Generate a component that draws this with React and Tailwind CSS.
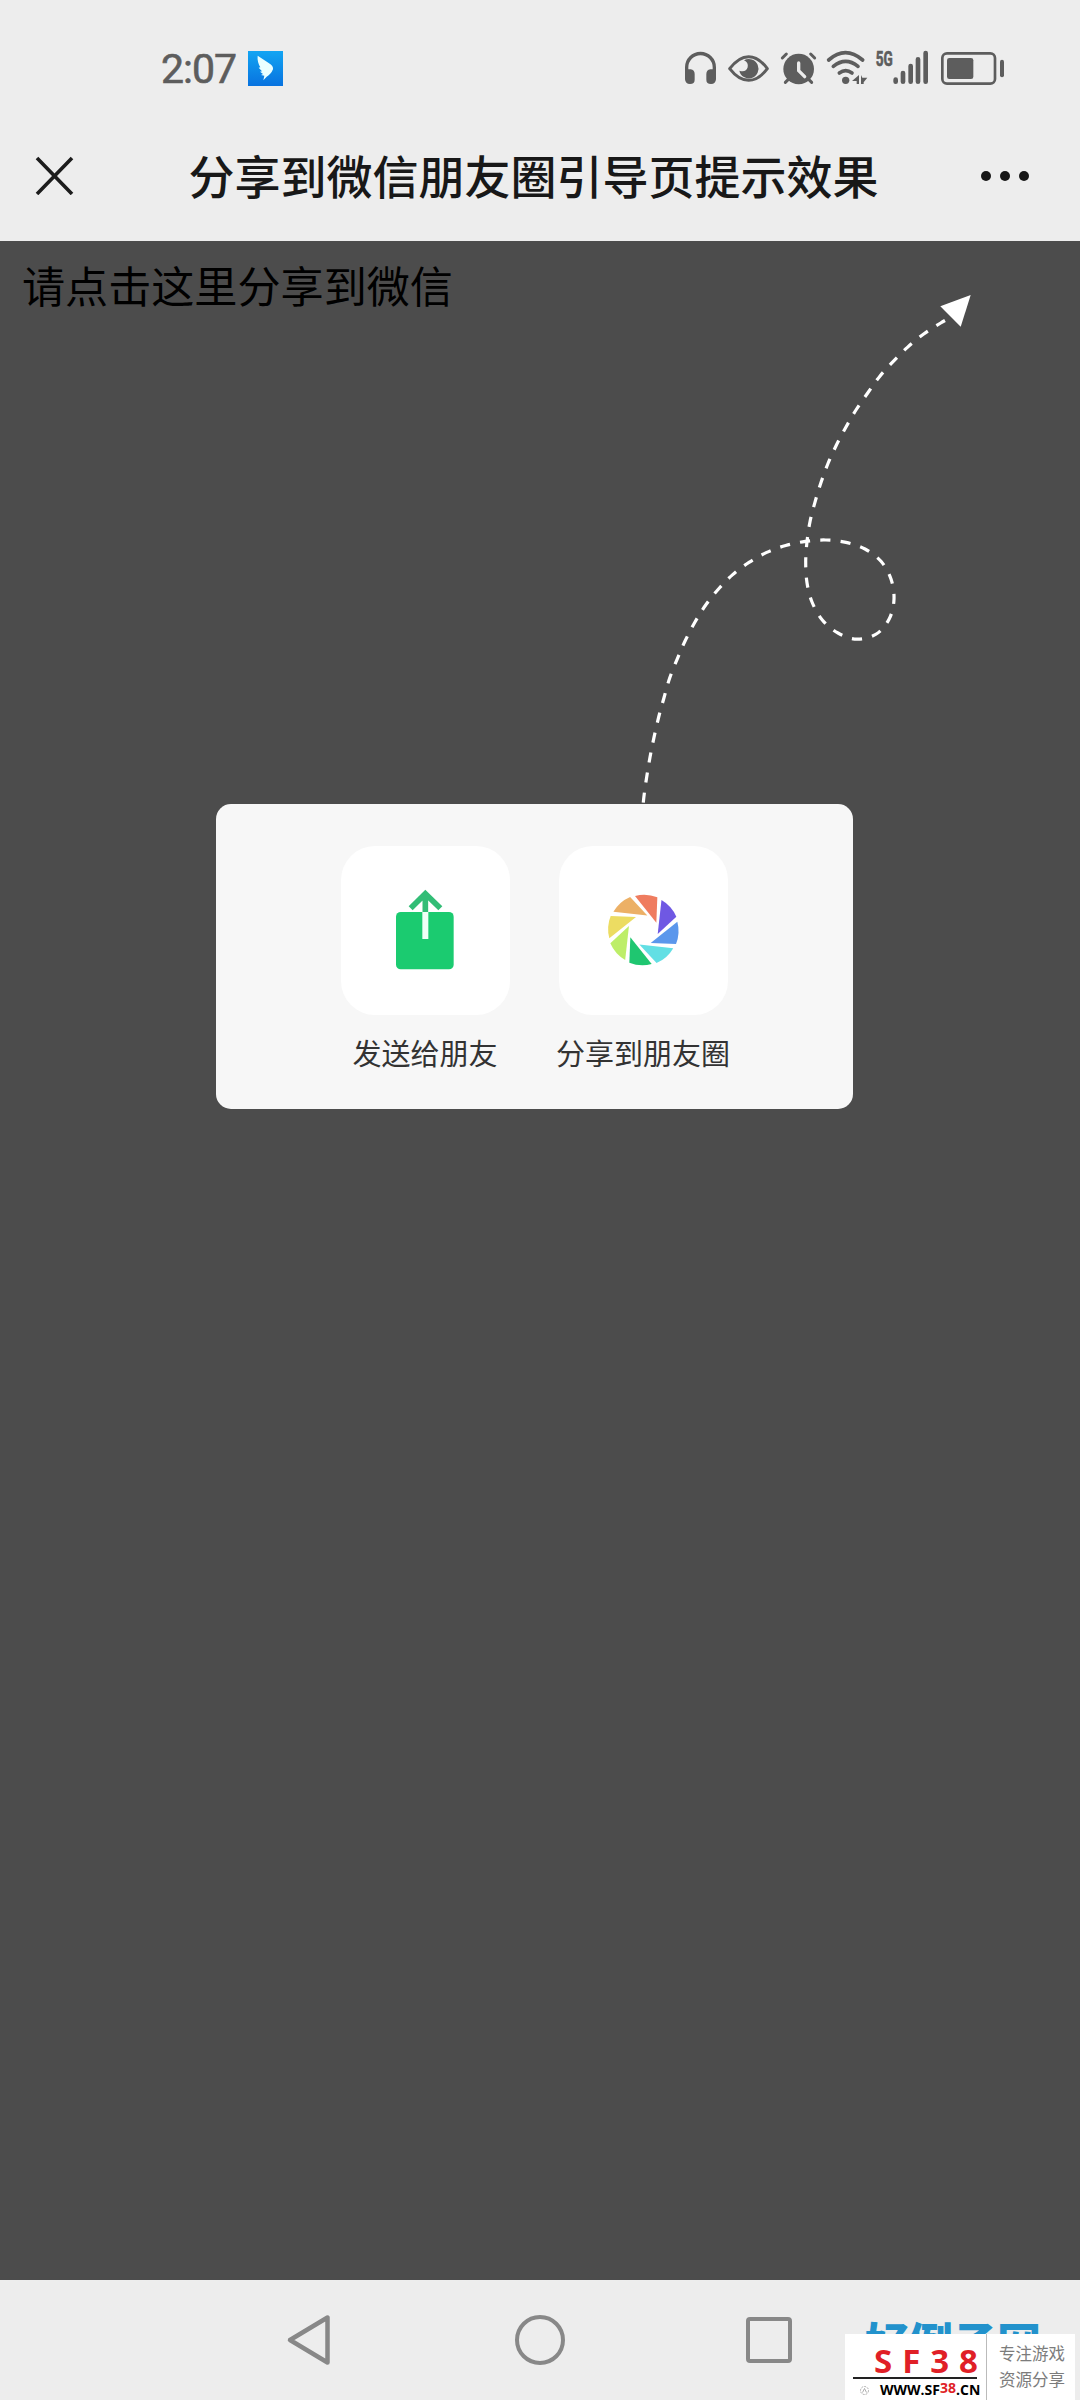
import clsx from 'clsx';

// Midpoints of the dashes along the guide line, from the card up to the menu button
const GUIDE_POINTS = [
  [642, 818], [643.8, 797.6], [646.7, 777], [650, 757.3], [654, 737.3], [658.7, 717], [664, 697.7],
  [669.7, 678], [677.3, 658.8], [685.3, 640.5], [695, 622], [705.7, 605], [718.3, 589.2],
  [732.7, 574.6], [749, 562.4], [766.7, 552.4], [785.7, 545.5], [805.3, 541.4], [825.7, 540],
  [846, 542.4], [865, 549], [881, 561.3], [891, 579], [894, 599.2], [889.3, 618.8],
  [876.3, 634], [857, 639.2], [838, 633], [822.3, 620], [812, 602], [807, 582.7],
  [805.7, 562], [807, 541.7], [810, 521.7], [815, 502.1], [821, 482.5], [828, 463.5],
  [836.3, 445.3], [846, 427], [856.3, 409.5], [867.7, 393], [879.7, 376.4], [893.3, 361.3],
  [907.7, 347.1], [923.7, 334], [940.7, 323], [958.5, 313]
];

const BLADES = ['#ef7c5f', '#6f58e3', '#5b97ec', '#62dfe4', '#1fc670', '#bdee68', '#ecdc62', '#ecb066'];

// Catmull-Rom spline through the points, written as cubic segments
function smoothPath(points) {
  let d = `M${points[0][0]} ${points[0][1]}`;
  for (let i = 0; i < points.length - 1; i++) {
    const p0 = points[i - 1] || points[i];
    const p1 = points[i];
    const p2 = points[i + 1];
    const p3 = points[i + 2] || p2;
    d += `C${p1[0] + (p2[0] - p0[0]) / 6} ${p1[1] + (p2[1] - p0[1]) / 6} ${p2[0] - (p3[0] - p1[0]) / 6} ${p2[1] - (p3[1] - p1[1]) / 6} ${p2[0]} ${p2[1]}`;
  }
  return d;
}

function StatusIcons() {
  return (
    <svg width="350" height="80" viewBox="0 0 1050 240" fill="none" stroke="#5d5d5d" strokeLinecap="round" strokeLinejoin="round">
      {/* headphones */}
      <path d="M50 138V112a41.500 41.500 0 0 1 83 0v26" strokeWidth="10" />
      <path d="M45 118h17q12 2 12 14v17q0 13-14 13t-15-14zM138 118h-17q-12 2-12 14v17q0 13 14 13t15-14z" fill="#5d5d5d" stroke="none" />
      {/* eye */}
      <path d="M179 116q27-36 57-36t56 36q-26 35-56 35t-57-35z" strokeWidth="9" />
      <path d="M222 91a29 29 0 1 1-14 31q20 6 25-10 3-15-11-21z" fill="#5d5d5d" stroke="none" />
      {/* alarm */}
      <circle cx="386" cy="117" r="46" fill="#5d5d5d" stroke="none" />
      <path d="M337 84l12-12M434 84l-12-12M346 157l12-12M425 157l-12-12" strokeWidth="9" />
      <path d="M386 99v23l18 18" stroke="#ececec" strokeWidth="10" />
      {/* wifi */}
      <path d="M476 90q50-44 102 0M490 109q37-30 74 0M508 129q19-14 38 0" strokeWidth="11" />
      <circle cx="527" cy="151" r="11" fill="#5d5d5d" stroke="none" />
      <path d="M567 135v27h-7v-9h-14zM573 162v-27l4 8h15l-11 14v5z" fill="#5d5d5d" stroke="none" />
      {/* signal */}
      <path d="M677 149v6M699 129v26M722 108v47M744 88v67M767 69v86" strokeWidth="14" />
      {/* battery */}
      <rect x="817" y="70" width="158" height="91" rx="14" strokeWidth="8" />
      <rect x="831" y="84" width="79" height="63" rx="7" fill="#5d5d5d" stroke="none" />
      <path d="M996 95v41" strokeWidth="12" />
      <text x="617" y="108" fill="#5d5d5d" stroke="#5d5d5d" strokeWidth="2" fontFamily="Roboto" fontWeight="700" fontSize="61" textLength="51" lengthAdjust="spacingAndGlyphs">5G</text>
    </svg>
  );
}

function StatusBar() {
  return (
    <div className="flex h-[110px] items-start pl-[161px] pt-[30px]">
      <span className="w-[87px] pt-[15px] text-[41px] leading-[48px] tracking-[-1px] text-[#5d5d5d] [-webkit-text-stroke:0.6px_#5d5d5d] font-['Roboto',sans-serif]">2:07</span>
      <svg className="mt-[21px]" width="35" height="35" viewBox="0 0 105 105">
        <defs>
          <linearGradient id="wing" x1="0" y1="0" x2="0" y2="1">
            <stop offset="0" stopColor="#12a5f3" />
            <stop offset="1" stopColor="#0872df" />
          </linearGradient>
        </defs>
        <rect width="105" height="105" fill="url(#wing)" />
        <path d="M29 14L62 36q15 9 13 19-6 15-19 22L46 88l3-14-10-2 6-3-9-7 6-1-10-11 5-1q-10-17-8-35z" fill="#eaffff" />
      </svg>
      <div className="ml-[387px]"><StatusIcons /></div>
    </div>
  );
}

function TitleBar() {
  return (
    <header className="flex h-[131px] items-center justify-between pl-[35px] pr-[51px]">
      <svg width="39" height="39" viewBox="0 0 39 39" stroke="#1c1c1c" strokeWidth="3.600">
        <path d="M2 2l35 36M37 2L2 38" />
      </svg>
      <h1 className="ml-[12px] mb-[4px] text-[46px] font-medium leading-[66px] text-[#181818] font-['Noto_Sans_CJK_SC',sans-serif]">分享到微信朋友圈引导页提示效果</h1>
      <div className="flex gap-[9px]">
        <span className="size-[10px] rounded-full bg-[#161616]" />
        <span className="size-[10px] rounded-full bg-[#161616]" />
        <span className="size-[10px] rounded-full bg-[#161616]" />
      </div>
    </header>
  );
}

function SendIcon() {
  return (
    <svg width="100" height="110" viewBox="0 0 300 330">
      <rect x="48" y="126" width="173" height="172" rx="14" fill="#1bcb70" />
      <path d="M136 130V68M92 115l44-44 45 44" fill="none" stroke="#32bd76" strokeWidth="17" />
      <rect x="127" y="126" width="18" height="81" fill="#effff6" />
    </svg>
  );
}

function MomentsIcon() {
  return (
    <svg width="100" height="100" viewBox="0 0 300 300">
      {BLADES.map((color, i) => (
        <path key={color} d="M120 48A106 106 0 0 1 187 52L184 128z" fill={color} transform={`rotate(${i * 45} 145 150)`} />
      ))}
    </svg>
  );
}

function ShareOption({ label, className, children }) {
  return (
    <div className="flex w-[176px] flex-col items-center">
      <div className={clsx('flex h-[169px] w-[169px] rounded-[34px] bg-white', className)}>{children}</div>
      <span className="mt-[16px] whitespace-nowrap text-[29px] leading-[42px] text-[#333]">{label}</span>
    </div>
  );
}

function GuideArrow() {
  const steps = GUIDE_POINTS.length - 1;
  return (
    <svg className="absolute left-0 top-0" width="1080" height="563" viewBox="0 241 1080 563">
      <path
        d={smoothPath(GUIDE_POINTS)}
        pathLength={steps}
        strokeDasharray="0.5 0.5"
        strokeDashoffset="0.25"
        fill="none"
        stroke="#fff"
        strokeWidth="3.200"
      />
      <path d="M970.700 295L940.300 306.200 960.700 326.800z" fill="#fff" />
    </svg>
  );
}

function Watermark() {
  return (
    <div className="absolute bottom-0 right-[5px] h-[84px] w-[230px] font-['Noto_Sans_CJK_SC',sans-serif]">
      <div className="ml-[20px] h-[18px] whitespace-nowrap pt-px text-[44px] font-black leading-[48px] text-[#2292cc]">好例子网</div>
      <div className="relative flex h-[66px] bg-white">
        <div className="w-[142px] border-r border-[#bbb] font-['Open_Sans',sans-serif] font-bold">
          <div className="ml-[8px] flex h-[43px] w-[125px] justify-between pl-[21px] pt-[8px] text-[33px] leading-[38px] text-[#e01f27]">
            <span>S</span>
            <span>F</span>
            <span>3</span>
            <span>8</span>
          </div>
          <div className="ml-[8px] h-[2px] w-[124px] bg-[#222]" />
          <div className="flex h-[21px] items-center pl-[15px] pt-px text-[14px] leading-[18px] text-black">
            <svg width="9" height="9" viewBox="0 0 9 9" fill="none" stroke="#999" strokeWidth="0.800">
              <circle cx="4.500" cy="4.500" r="4" strokeDasharray="2 1" />
              <path d="M2.500 6.500l2-4 2 4" />
            </svg>
            <span className="ml-[11px]">WWW.SF</span>
            <span className="pb-[5px] text-[#e01f27]">38</span>
            <span>.CN</span>
          </div>
        </div>
        <div className="pl-[12px] pt-[6px] text-[16.500px] leading-[26px] text-[#7c7c7c]">
          <p>专注游戏</p>
          <p>资源分享</p>
        </div>
      </div>
    </div>
  );
}

function NavBar() {
  return (
    <nav className="relative flex h-[120px] items-center pl-[286px] text-[#888]">
      <svg width="46" height="52" viewBox="0 0 46 52" fill="none" stroke="currentColor" strokeWidth="4.500" strokeLinejoin="round">
        <path d="M4 26L41.500 3.500v45z" />
      </svg>
      <div className="ml-[183px] size-[50px] rounded-full border-[4.500px] border-current" />
      <div className="ml-[181px] size-[46px] rounded-[4px] border-[4px] border-current" />
      <Watermark />
    </nav>
  );
}

export default function App() {
  return (
    <div className="flex h-[2400px] w-[1080px] flex-col overflow-hidden bg-[#ededed] font-['Noto_Sans_CJK_SC',sans-serif]">
      <StatusBar />
      <TitleBar />
      <main className="relative h-[2039px] bg-[#4c4c4c]">
        <p className="h-[563px] pl-[22px] pt-[12px] text-[43.100px] leading-[62px] text-black">请点击这里分享到微信</p>
        <GuideArrow />
        <section className="ml-[216px] flex h-[305px] w-[637px] gap-[42px] rounded-[15px] bg-[#f7f7f7] pl-[121px] pt-[42px]">
          <ShareOption label="发送给朋友" className="pl-[39px] pt-[24px]">
            <SendIcon />
          </ShareOption>
          <ShareOption label="分享到朋友圈" className="pl-[36px] pt-[34px]">
            <MomentsIcon />
          </ShareOption>
        </section>
      </main>
      <NavBar />
    </div>
  );
}
